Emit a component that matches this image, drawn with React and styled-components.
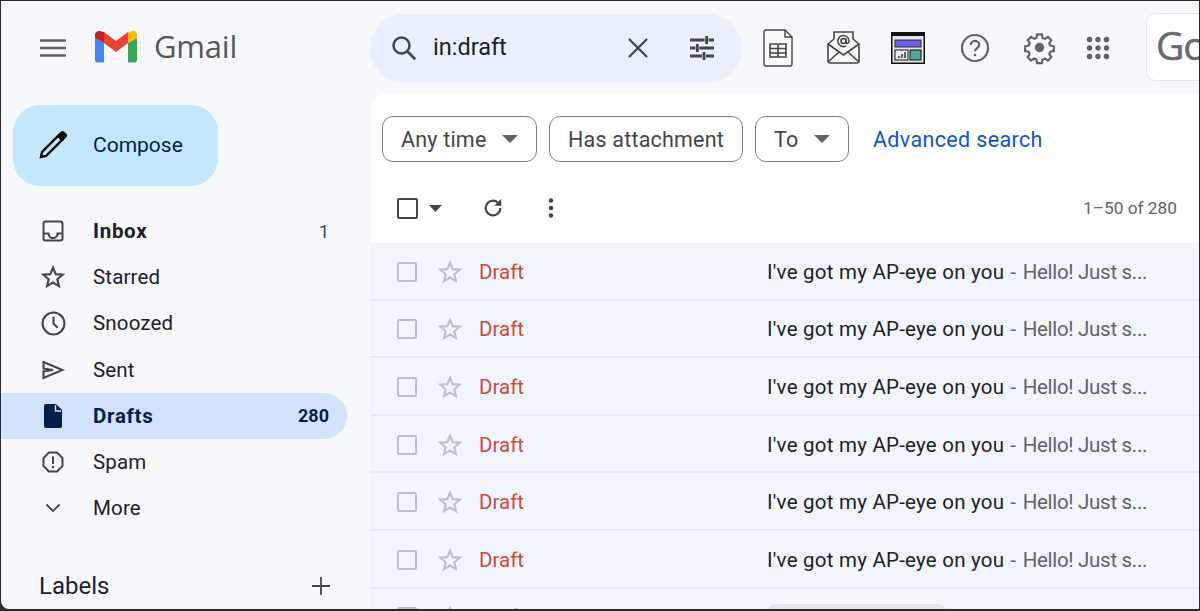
import React from "react";
import styled, { createGlobalStyle } from "styled-components";

const Global = createGlobalStyle`
  html, body { margin: 0; padding: 0; height: 100%; overflow: hidden; background: #262626; }
  #root { height: 100%; }
  * { box-sizing: border-box; }
`;

const Frame = styled.div`
  width: 1200px; height: 611px; overflow: hidden;
  padding: 1px 1px 2px 1px;
  background: #2a2a2a;
`;
const Screen = styled.div`
  width: 100%; height: 100%; overflow: hidden;
  background: #f6f8fc; border-bottom-left-radius: 8px;
  display: grid; grid-template-columns: 369px 1fr; grid-template-rows: 93px 1fr;
  font-family: Roboto, "Liberation Sans", sans-serif; color: #202124;
`;
const TopLeft = styled.div`
  display: flex; align-items: center; padding: 0 0 0 38px;
`;
const MenuIcon = styled.svg`width: 28px; height: 22px; margin-right: 27px;`;
const Logo = styled.svg`width: 44px; height: 33px; margin-top: -2px;`;
const Wordmark = styled.span`
  font-size: 31px; color: #54585c; margin-left: 16px; margin-top: -3px; letter-spacing: -.2px;
  font-family: "Open Sans", Roboto, sans-serif;
`;
const TopRight = styled.div`display: flex; align-items: center; min-width: 0; overflow: hidden;`;
const Search = styled.div`
  width: 372px; height: 69px; border-radius: 35px; background: #e9f0fb; margin-top: 1px;
  display: flex; align-items: center; padding: 0 24px 0 19px; flex: none;
`;
const SearchText = styled.span`font-size: 23.5px; margin: -2px 0 0 14px; flex: 1; color: #202124;`;
const IconSlot = styled.div`
  flex: none; display: flex; align-items: center; justify-content: center;
  width: ${p => p.$w || 36}px; margin-left: ${p => p.$ml || 0}px;
  & > svg { flex: none; }
`;
const AccountCard = styled.div`
  flex: none; width: 70px; height: 68px; margin-left: 36px; margin-top: -1px; background: #fff;
  border: 1px solid #e3e5e8; border-radius: 10px 0 0 10px; overflow: hidden;
  font: 400 39px "Open Sans", Roboto, sans-serif; color: #666a6f; padding: 6px 0 0 9px; letter-spacing: -1px;
  line-height: 50px; -webkit-text-stroke: .5px #666a6f;
`;
const Side = styled.aside`padding-top: 11px; display: flex; flex-direction: column; min-height: 0;`;
const Compose = styled.div`
  width: 205px; height: 81px; margin-left: 12px; border-radius: 27px; background: #c2e7ff;
  display: flex; align-items: center; padding: 0 0 2px 25px; color: #041e49; font-size: 21px; gap: 25px;
  flex: none;
`;
const Nav = styled.nav`margin-top: 22px; display: flex; flex-direction: column;`;
const NavItem = styled.div`
  height: 46.2px; width: 346px; display: flex; align-items: center; padding: 0 18px 0 36px;
  font-size: 20.5px; border-radius: 0 23px 23px 0;
  font-weight: ${p => (p.$bold ? 700 : 400)};
  letter-spacing: ${p => (p.$bold ? ".7px" : ".15px")};
  color: ${p => (p.$active ? "#041e49" : "#202124")};
  background: ${p => (p.$active ? "#d3e3fd" : "transparent")};
`;
const NavIcon = styled.div`width: 32px; display: flex; justify-content: center; margin-right: 24px; flex: none;`;
const NavLabel = styled.span`flex: 1;`;
const Count = styled.span`font-size: 18px; letter-spacing: 0; font-weight: ${p => (p.$bold ? 700 : 400)}; color: ${p => (p.$bold ? "#041e49" : "#444746")};`;
const Labels = styled.div`
  margin-top: 33px; padding: 0 17px 0 38px; width: 346px; height: 44px;
  display: flex; align-items: center; justify-content: space-between; font-size: 24px;
`;
const Main = styled.main`
  background: #fff; border-radius: 16px 0 0 0; overflow: hidden; min-width: 0;
`;
const Chips = styled.div`display: flex; align-items: center; padding-left: 12px; gap: 12px; height: 90px;`;
const Chip = styled.div`
  height: 46px; border: 1px solid #7b7f84; border-radius: 11px; display: flex; align-items: center;
  padding: 0 18px; gap: 15.5px; font-size: 21.5px; color: #444746; letter-spacing: .2px;
`;
const Advanced = styled.span`font-size: 21.5px; color: #0b57d0; margin-left: 12px; letter-spacing: .35px;`;
const Toolbar = styled.div`
  height: 59px; display: flex; align-items: center; padding: 0 22px 11px 27px;
`;
const Range = styled.span`margin-left: auto; font-size: 17.3px; color: #5f6368;`;
const Row = styled.div`
  height: 57.6px; display: flex; align-items: center; background: #f2f6fc;
  border-bottom: 2px solid #e6eaf0; padding: 2px 0 0 27px;
`;
const Sender = styled.span`font-size: 20.5px; color: #d14836; width: 288px; margin-left: 16px; flex: none;`;
const Subject = styled.span`font-size: 20.5px; color: #202124; white-space: nowrap; letter-spacing: .23px;`;
const Snippet = styled.span`font-size: 20.5px; color: #5f6368; white-space: nowrap; margin-left: 6px; letter-spacing: -.3px;`;
const Dash = styled.span`margin-right: 7px;`;
const PartialRow = styled(Row)`align-items: flex-start; border: 0; padding-top: 18px; overflow: hidden;`;
const PartialStar = styled.div`margin: -3px 0 0 20px; display: flex;`;
const PartialSender = styled(Sender)`margin-top: -2px; width: 40px; line-height: 24px;`;
const Attachment = styled.div`
  height: 40px; width: 178px; margin: -3px 0 0 249px; background: #e3e4e6; border-radius: 8px 8px 0 0; flex: none;
`;
const StarSlot = styled.div`margin-left: 20px; display: flex;`;

const Ico = ({ size = 24, vb = "0 0 24 24", children }) => (
  <svg width={size} height={size} viewBox={vb} fill="none" stroke="#444746" strokeWidth="2">{children}</svg>
);
const Star = ({ color = "#444746", size = 26, sw = 2 }) => (
  <svg width={size} height={size} viewBox="0 0 24 24" fill="none" stroke={color} strokeWidth={sw} strokeLinejoin="miter">
    <path d="M12 3.500l2.500 5.900 6.400.5-4.900 4.200 1.500 6.300L12 17.100l-5.500 3.300 1.500-6.300-4.900-4.200 6.400-.5z" />
  </svg>
);
const Box = styled.div`
  width: ${p => p.$s}px; height: ${p => p.$s}px; border: 2px solid ${p => p.$c}; border-radius: 2px; flex: none;
`;

const rows = [0, 1, 2, 3, 4, 5];

export default function App() {
  return (
    <Frame>
      <Global />
      <Screen>
        <TopLeft>
          <MenuIcon viewBox="0 0 28 22"><path d="M1 3.500h26M1 11h26M1 18.500h26" stroke="#5f6368" strokeWidth="2.400" /></MenuIcon>
          <Logo viewBox="0 0 44 33">
            <path d="M1 8v22a2.500 2.500 0 0 0 2.500 2.500H10V13z" fill="#4285f4" />
            <path d="M34 13v19.500h6.500A2.500 2.500 0 0 0 43 30V8z" fill="#34a853" />
            <path d="M34 2v11l9-5V5c0-4-4-5-6-3.500z" fill="#fbbc04" />
            <path d="M10 13V2l12 9 12-9v11L22 22z" fill="#ea4335" />
            <path d="M1 5v3l9 5V2L7 1.500C4 0 1 2 1 5z" fill="#c5221f" />
          </Logo>
          <Wordmark>Gmail</Wordmark>
        </TopLeft>
        <TopRight>
          <Search>
            <Ico size={30}><circle cx="10" cy="10" r="6.400" stroke="#444746" strokeWidth="2" /><path d="M15 15l6 6" strokeWidth="2.200" /></Ico>
            <SearchText>in:draft</SearchText>
            <IconSlot $w={24}><svg width="24" height="24" viewBox="0 0 24 24"><path d="M3 3l18 18M21 3L3 21" stroke="#444746" strokeWidth="2.300" /></svg></IconSlot>
            <IconSlot $w={32} $ml={36}>
              <svg width="32" height="32" viewBox="0 0 24 24" fill="none" stroke="#444746" strokeWidth="2.100">
                <path d="M3 6h11M17 6h4M15.500 3v6M3 12h4M10 12h11M8.500 9v6M3 18h9M15 18h6M13.500 15v6" />
              </svg>
            </IconSlot>
          </Search>
          <IconSlot $w={32} $ml={20}>
            <svg width="30" height="38" viewBox="0 0 30 38" fill="none" stroke="#444" strokeWidth="1.400">
              <path d="M3 1h19l7 7v27a2 2 0 0 1-2 2H3a2 2 0 0 1-2-2V3a2 2 0 0 1 2-2z" fill="#fafafa" />
              <path d="M22 1v7h7" />
              <path d="M7 15h16v13H7zM7 19.500h16M7 24h16M15 15v13" strokeWidth="1.600" />
            </svg>
          </IconSlot>
          <IconSlot $w={34} $ml={32}>
            <svg width="33" height="33" viewBox="0 0 33 33" fill="none" stroke="#444" strokeWidth="1.600">
              <path d="M1 13l6-5V1h19v7l6 5v17a2 2 0 0 1-2 2H3a2 2 0 0 1-2-2z" fill="#f7f7f7" />
              <path d="M1 13l15.500 11L32 13M1 31l11-10M32 31L21 21" />
              <circle cx="16.500" cy="10" r="2.500" /><path d="M19 7.500v3.500c0 2 3 2 3-1a5.600 5.600 0 1 0-3 5" />
            </svg>
          </IconSlot>
          <IconSlot $w={34} $ml={31}>
            <svg width="34" height="32" viewBox="0 0 34 32">
              <rect x="0.750" y="0.750" width="32.500" height="30.500" fill="#e4e4e4" stroke="#111" strokeWidth="1.500" />
              <rect x="1" y="1" width="32" height="3" fill="#111" />
              <rect x="4" y="8" width="26" height="7" fill="#6f63e6" stroke="#111" strokeWidth=".8" />
              <rect x="4" y="18" width="13" height="10" fill="#eee" stroke="#111" />
              <path d="M8 26v-2M11 26v-4M14 26v-6" stroke="#111" strokeWidth="1.300" />
              <rect x="19" y="18" width="11" height="10" fill="#4ea79a" stroke="#111" />
            </svg>
          </IconSlot>
          <IconSlot $w={30} $ml={35}>
            <svg width="30" height="30" viewBox="0 0 30 30" fill="none" stroke="#5f6368" strokeWidth="2.200">
              <circle cx="15" cy="15" r="13" />
              <path d="M10.800 12a4.200 4.200 0 0 1 8.400 0c0 3-4.200 3.200-4.200 6.200" />
              <circle cx="15" cy="22" r="1.300" fill="#5f6368" stroke="none" />
            </svg>
          </IconSlot>
          <IconSlot $w={30} $ml={34}>
            <svg width="35" height="35" viewBox="0 0 24 24" fill="none" stroke="#5f6368" strokeWidth="1.600">
              <path d="M10.200 2.500h3.600l.5 2.700 1.700.7 2.300-1.500 2.500 2.500-1.500 2.300.7 1.700 2.700.5v3.600l-2.700.5-.7 1.700 1.500 2.300-2.500 2.500-2.300-1.500-1.700.7-.5 2.700h-3.600l-.5-2.700-1.700-.7-2.300 1.500-2.500-2.500 1.500-2.300-.7-1.700-2.700-.5v-3.600l2.700-.5.7-1.700-1.500-2.300 2.500-2.500 2.300 1.500 1.700-.7z" transform="translate(12 12) scale(.92) translate(-12 -12.300)" />
              <circle cx="12" cy="12" r="3.200" fill="#5f6368" stroke="none" />
            </svg>
          </IconSlot>
          <IconSlot $w={24} $ml={32}>
            <svg width="24" height="24" viewBox="0 0 24 24" fill="#5f6368">
              {[3.5, 12, 20.5].flatMap(y => [3.5, 12, 20.5].map(x => <circle key={`${x}-${y}`} cx={x} cy={y} r="2.700" />))}
            </svg>
          </IconSlot>
          <AccountCard>Go</AccountCard>
        </TopRight>
        <Side>
          <Compose>
            <svg width="30" height="30" viewBox="0 0 30 30" fill="none" stroke="#000" strokeWidth="2.400">
              <path d="M3 27l1-5L20 6l4 4L8 26z" />
              <path d="M21 5l2.500-2.500a1.400 1.400 0 0 1 2 0l2 2a1.400 1.400 0 0 1 0 2L25 9z" fill="#000" />
            </svg>
            Compose
          </Compose>
          <Nav>
            <NavItem $bold>
              <NavIcon><svg width="22" height="22" viewBox="0 0 22 22" fill="none" stroke="#444746" strokeWidth="2"><rect x="1.500" y="1.500" width="19" height="19" rx="2" /><path d="M1.500 13.500h5a4.500 4.500 0 0 0 9 0h5" /></svg></NavIcon>
              <NavLabel>Inbox</NavLabel><Count>1</Count>
            </NavItem>
            <NavItem><NavIcon><Star /></NavIcon><NavLabel>Starred</NavLabel></NavItem>
            <NavItem>
              <NavIcon><svg width="25" height="25" viewBox="0 0 24 24" fill="none" stroke="#444746" strokeWidth="2"><circle cx="12" cy="12" r="10.500" /><path d="M12 5.500V12l4 4" /></svg></NavIcon>
              <NavLabel>Snoozed</NavLabel>
            </NavItem>
            <NavItem>
              <NavIcon><svg width="23" height="20" viewBox="0 0 23 20" fill="none" stroke="#444746" strokeWidth="2.100"><path d="M1.500 2l19 8-19 8v-6.500L11 10 1.500 8.500z" /></svg></NavIcon>
              <NavLabel>Sent</NavLabel>
            </NavItem>
            <NavItem $active $bold>
              <NavIcon><svg width="18" height="24" viewBox="0 0 18 24"><path d="M2 0h10l6 6v16a2 2 0 0 1-2 2H2a2 2 0 0 1-2-2V2a2 2 0 0 1 2-2z" fill="#041e49" /><path d="M11.500 1v6h5.500" fill="none" stroke="#d3e3fd" strokeWidth="1.400" /></svg></NavIcon>
              <NavLabel>Drafts</NavLabel><Count $bold>280</Count>
            </NavItem>
            <NavItem>
              <NavIcon><svg width="22" height="22" viewBox="0 0 22 22" fill="none" stroke="#444746" strokeWidth="2"><path d="M7 1.500h8l5.500 5.500v8L15 20.500H7L1.500 15V7z" strokeLinejoin="round" /><path d="M11 5.500v7.500" /><circle cx="11" cy="16" r="1.200" fill="#444746" stroke="none" /></svg></NavIcon>
              <NavLabel>Spam</NavLabel>
            </NavItem>
            <NavItem>
              <NavIcon><svg width="16" height="10" viewBox="0 0 16 10" fill="none" stroke="#444746" strokeWidth="1.800"><path d="M1.500 1.500L8 8l6.500-6.500" /></svg></NavIcon>
              <NavLabel>More</NavLabel>
            </NavItem>
          </Nav>
          <Labels>
            Labels
            <svg width="18" height="18" viewBox="0 0 18 18"><path d="M9 0v18M0 9h18" stroke="#444746" strokeWidth="1.800" /></svg>
          </Labels>
        </Side>
        <Main>
          <Chips>
            <Chip>Any time <svg width="16" height="8" viewBox="0 0 16 8"><path d="M0 0h16L8 8z" fill="#5f6368" /></svg></Chip>
            <Chip>Has attachment</Chip>
            <Chip>To <svg width="16" height="8" viewBox="0 0 16 8"><path d="M0 0h16L8 8z" fill="#5f6368" /></svg></Chip>
            <Advanced>Advanced search</Advanced>
          </Chips>
          <Toolbar>
            <Box $s={21} $c="#444746" />
            <svg width="13" height="7" viewBox="0 0 13 7" style={{ marginLeft: 11 }}><path d="M0 0h13L6.500 7z" fill="#444746" /></svg>
            <svg width="22" height="22" viewBox="0 0 24 24" fill="none" stroke="#444746" strokeWidth="2.400" style={{ marginLeft: 40 }}>
              <path d="M20 12a8 8 0 1 1-2.500-5.800" />
              <path d="M21 2v7.500h-7.500z" fill="#444746" stroke="none" />
            </svg>
            <svg width="6" height="20" viewBox="0 0 6 20" fill="#444746" style={{ marginLeft: 44 }}>
              <circle cx="3" cy="2.500" r="2.300" /><circle cx="3" cy="10" r="2.300" /><circle cx="3" cy="17.500" r="2.300" />
            </svg>
            <Range>1–50 of 280</Range>
          </Toolbar>
          {rows.map(i => (
            <Row key={i}>
              <Box $s={20} $c="#bdc1c6" />
              <StarSlot><Star color="#bdc1c6" /></StarSlot>
              <Sender>Draft</Sender>
              <Subject>I've got my AP-eye on you</Subject>
              <Snippet><Dash>-</Dash>Hello! Just s...</Snippet>
            </Row>
          ))}
          <PartialRow>
            <Box $s={20} $c="#bdc1c6" />
            <PartialStar><Star color="#bdc1c6" /></PartialStar>
            <PartialSender>Draft</PartialSender>
            <Attachment />
          </PartialRow>
        </Main>
      </Screen>
    </Frame>
  );
}
